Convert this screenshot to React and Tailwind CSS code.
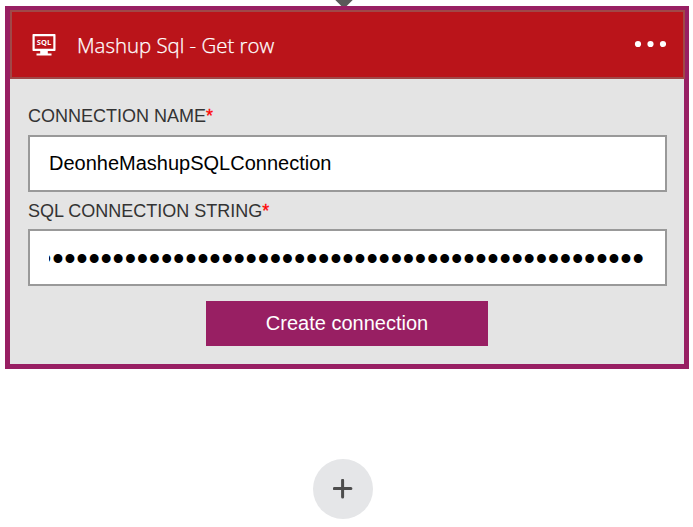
const PASSWORD = "•".repeat(50);

function MonitorIcon() {
  return (
    <svg width="24" height="22" viewBox="0 0 24 22" className="block shrink-0">
      <path
        fill="#fff"
        fillRule="evenodd"
        d="M1.2 0h21.6q.7 0 .7.7v15.6q0 .7-.7.7h-7v2.4h3.7V21.6H4.5V19.4h3.7V17h-7q-.7 0-.7-.7V.7Q.5 0 1.2 0zM2.7 2.2v12.6h18.6V2.2z"
      />
      <text x="12" y="11.2" textAnchor="middle" fill="#fff" fontFamily="Open Sans, sans-serif" fontWeight="700" fontSize="7.5">
        SQL
      </text>
    </svg>
  );
}

function Label({ children }) {
  return (
    <div className="h-[24px] whitespace-nowrap text-[18px] leading-[24px] text-[#333]">
      {children}
      <span className="text-[#ff0000] [-webkit-text-stroke:0.3px_#f00]">*</span>
    </div>
  );
}

export default function App() {
  return (
    <div className="flex h-[527px] w-[693px] flex-col overflow-hidden bg-white font-['Liberation_Sans',Arial,sans-serif]">
      <svg width="20" height="6" viewBox="0 0 20 6" className="ml-[334px] block shrink-0">
        <path d="M1.3 0h17.4l-6 6H7.3z" fill="#595959" />
      </svg>
      <section className="ml-[5px] flex h-[363px] w-[684px] shrink-0 flex-col border-[5px] border-t-4 border-[#981f63] bg-[#e4e4e4]">
        <header className="flex h-[69px] w-[675px] shrink-0 items-center border-2 border-[#a04848] bg-[#ba141a] pr-[17px] pl-[20px]">
          <MonitorIcon />
          <h1 className="ml-[21px] whitespace-nowrap font-['Open_Sans',sans-serif] text-[20.4px] leading-[28px] font-light text-white [-webkit-text-stroke:0.25px_#fff]">
            Mashup Sql - Get row
          </h1>
          <svg width="32" height="8" viewBox="0 0 32 8" className="mb-[1px] ml-auto block">
            <circle cx="4" cy="4" r="3.1" fill="#fff" />
            <circle cx="16.5" cy="4" r="3.1" fill="#fff" />
            <circle cx="29" cy="4" r="3.1" fill="#fff" />
          </svg>
        </header>
        <div className="flex flex-col pt-[25px] pr-[17px] pl-[18px]">
          <Label>CONNECTION NAME</Label>
          <div className="mt-[7px] flex h-[57px] items-center border-2 border-[#999] bg-white px-[19px] pb-[2px] text-[20px] text-black">
            DeonheMashupSQLConnection
          </div>
          <div className="mt-[7px]">
            <Label>SQL CONNECTION STRING</Label>
          </div>
          <div className="mt-[6px] flex h-[57px] items-center border-2 border-[#999] bg-white pr-[20.5px] pl-[19px]">
            <div className="flex h-[40px] w-full justify-end overflow-hidden text-[32.5px] leading-[43px] tracking-[0.71px] whitespace-nowrap text-black">
              <span>{PASSWORD}</span>
            </div>
          </div>
          <button className="mt-[15px] ml-[178px] h-[45px] w-[282px] bg-[#981f63] pb-[2px] text-[20px] text-white">
            Create connection
          </button>
        </div>
      </section>
      <button className="mt-[90px] ml-[313px] flex size-[60px] shrink-0 items-center justify-center rounded-full bg-[#e5e6e8]">
        <svg width="20" height="20" viewBox="0 0 20 20">
          <path d="M9.6 1.3v16.6M1.3 9.6h16.6" stroke="#4d4d4d" strokeWidth="3" strokeLinecap="round" />
        </svg>
      </button>
    </div>
  );
}
